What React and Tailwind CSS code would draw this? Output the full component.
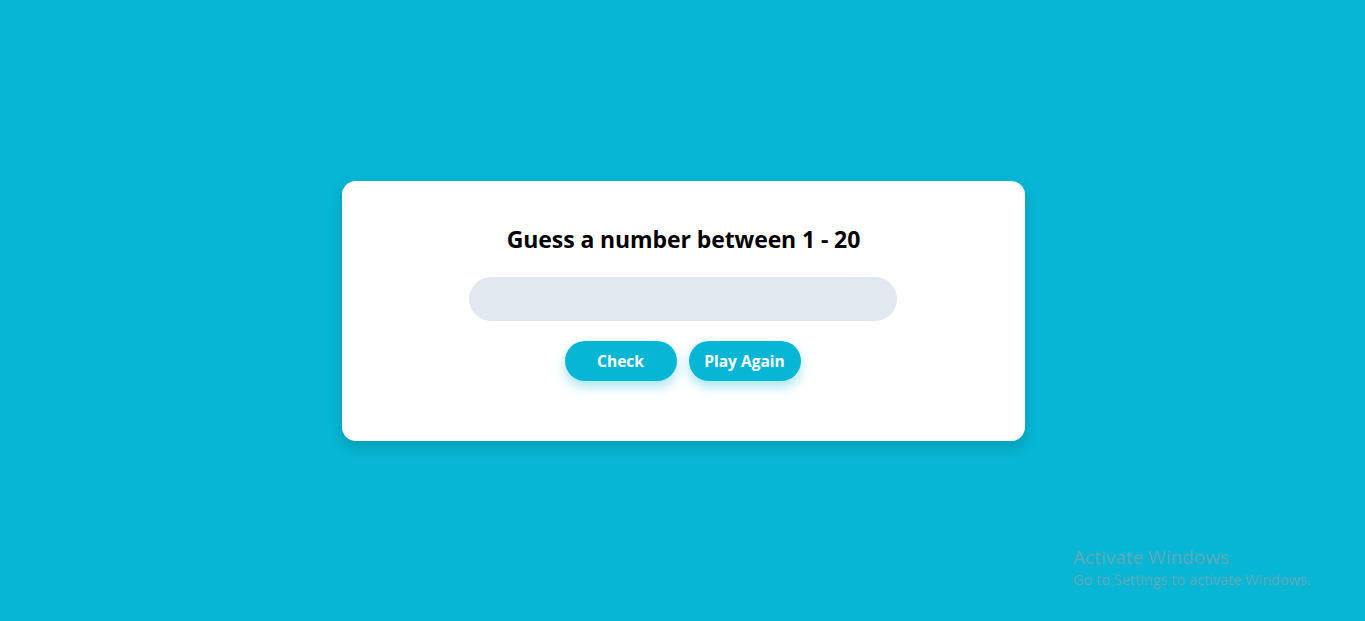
import React, { useState } from "react";

export default function App() {
    const [guess, setGuess] = useState("");

    return (
        <div
            className="relative min-h-screen bg-[#06b6d4] flex items-center justify-center"
            style={{ fontFamily: "'Open Sans', 'Noto Sans', sans-serif" }}
        >
            <div className="ml-[2px] w-[683px] bg-white rounded-[14px] shadow-[0_6px_14px_rgba(0,0,0,0.15)] flex flex-col items-center pt-[42px] pb-[60px]">
                <h1 className="text-[23px] leading-[32px] font-bold text-black tracking-[-0.1px]">
                    Guess a number between 1 - 20
                </h1>
                <input
                    type="number"
                    value={guess}
                    onChange={(e) => setGuess(e.target.value)}
                    className="mt-[22px] -ml-[2px] w-[428px] h-[44px] rounded-full bg-[#e2e8f0] px-5 outline-none text-center"
                />
                <div className="mt-5 -ml-[2px] flex gap-3">
                    <button className="w-[112px] h-10 pt-[2px] rounded-full bg-[#06b6d4] text-white text-[15.5px] font-bold shadow-[0_6px_12px_rgba(6,182,212,0.35)]">
                        Check
                    </button>
                    <button className="w-[112px] h-10 pt-[2px] rounded-full bg-[#06b6d4] text-white text-[15.5px] font-bold shadow-[0_6px_12px_rgba(6,182,212,0.35)]">
                        Play Again
                    </button>
                </div>
            </div>

            <div className="absolute left-[1073px] top-[545px] text-[#5fa9b9] pointer-events-none">
                <div className="text-[19px] leading-[24px]">Activate Windows</div>
                <div className="text-[14.5px] leading-[18px] mt-[2px]">
                    Go to Settings to activate Windows.
                </div>
            </div>
        </div>
    );
}
